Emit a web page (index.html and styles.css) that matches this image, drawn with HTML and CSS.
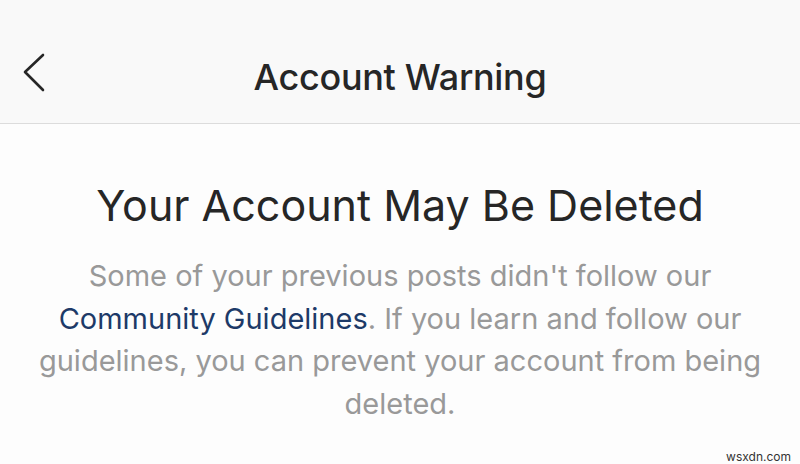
FILE: index.html
```html
<!DOCTYPE html>
<html lang="en">
<head>
    <meta charset="UTF-8">
    <meta name="viewport" content="width=device-width, initial-scale=1.0">
    <title>Account Warning</title>
    <link rel="stylesheet" href="styles.css">
</head>
<body>
    <div class="header">
        <a class="back" href="#">
            <svg width="24" height="40" viewBox="0 0 24 40">
                <path d="M21 2 L3 19 L21 37" fill="none" stroke="#262626" stroke-width="2.6" stroke-linecap="round" stroke-linejoin="round"/>
            </svg>
        </a>
        <h1>Account Warning</h1>
    </div>
    <div class="content">
        <h2>Your Account May Be Deleted</h2>
        <p>Some of your previous posts didn't follow our <a href="#">Community Guidelines</a>. If you learn and follow our guidelines, you can prevent your account from being deleted.</p>
    </div>
    <div class="watermark">wsxdn.com</div>
</body>
</html>
```

FILE: styles.css
```css
body {
    font-family: Inter, "Liberation Sans", sans-serif;
    margin: 0;
    padding: 0;
    background-color: #fdfdfd;
    color: #262626;
    height: 464px;
    overflow: hidden;
    position: relative;
}
.header {
    height: 123px;
    background-color: #f9f9f9;
    border-bottom: 1px solid #dcdcdc;
    display: flex;
    align-items: center;
    justify-content: center;
    position: relative;
}
.header h1 {
    margin: 0;
    padding-top: 31px;
    font-size: 36px;
    font-weight: 500;
    letter-spacing: -0.3px;
}
.back {
    position: absolute;
    left: 22px;
    top: 53px;
    display: block;
}
.content {
    padding: 0 30px;
    text-align: center;
}
.content h2 {
    margin: 53px 0 0;
    font-size: 43px;
    font-weight: 400;
    line-height: 56px;
}
.content p {
    margin: 22px 0 0;
    font-size: 29px;
    line-height: 42.5px;
    color: #999;
}
.content p a {
    color: #1d3a68;
    text-decoration: none;
}
.watermark {
    position: absolute;
    right: 9px;
    bottom: 0;
    font-size: 12px;
    color: #333;
}
```
